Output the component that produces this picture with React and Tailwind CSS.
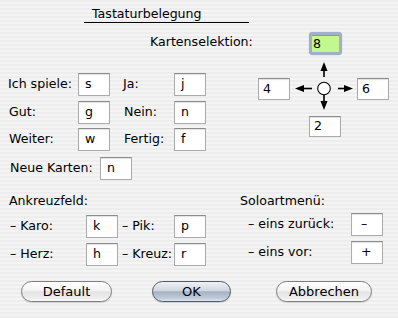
import React from "react";

const field =
  "w-[32px] h-[23px] bg-white border border-[#ababab] border-t-[#8c8c8c] shadow-[inset_0_1px_1px_rgba(0,0,0,0.12)] flex items-center pl-[6px] leading-none";

function Field({ v, cls = "" }) {
  return <div className={field + " " + cls}>{v}</div>;
}

function Btn({ children, w, primary }) {
  return (
    <div
      className={
        "h-[21px] rounded-full border flex items-center justify-center leading-none text-[13px] shadow-[0_1px_1px_rgba(0,0,0,0.15)] " +
        w +
        (primary
          ? " border-[#4f5967] bg-[linear-gradient(to_bottom,#eef1f5_0%,#d0d7e1_45%,#a6b2c3_52%,#c0cad7_85%,#dfe5ec_100%)]"
          : " border-[#7e7e7e] bg-[linear-gradient(to_bottom,#ffffff_0%,#f3f3f3_45%,#e3e3e3_52%,#ededed_85%,#fbfbfb_100%)]")
      }
    >
      {children}
    </div>
  );
}

function ArrowV({ up, h, y1, y2 }) {
  const tip = up ? y1 : y2;
  const base = up ? y1 + 9 : y2 - 9;
  return (
    <svg width="67" height={h} className="overflow-visible block">
      <line x1="34" y1={up ? base : y1} x2="34" y2={up ? y2 : base} stroke="#000" strokeWidth="1.6" />
      <polygon points={`34,${tip} 30.5,${base} 37.5,${base}`} fill="#000" />
    </svg>
  );
}

export default function App() {
  return (
    <div
      className="w-[398px] h-[318px] overflow-hidden text-black text-[12.6px] bg-[repeating-linear-gradient(to_bottom,#ededed_0px,#ededed_2px,#f4f4f4_2px,#f4f4f4_4px)]"
      style={{ fontFamily: '"Lucida Grande","DejaVu Sans",sans-serif' }}
    >
      {/* top section */}
      <div className="flex">
        <div className="w-[256px] flex flex-col">
          <div className="mt-[6px] ml-[84px] w-[165px] h-[17px] border-b border-black pl-[8px] leading-[16px]">
            Tastaturbelegung
          </div>
          <div className="mt-[11px] ml-[150px] leading-[16px] whitespace-nowrap">Kartenselektion:</div>

          <div className="mt-[23px] flex items-center h-[23px]">
            <span className="pl-[8px] w-[78px]">Ich spiele:</span>
            <Field v="s" />
            <span className="pl-[13px] w-[64px]">Ja:</span>
            <Field v="j" />
          </div>
          <div className="mt-[5px] flex items-center h-[23px]">
            <span className="pl-[9px] w-[78px]">Gut:</span>
            <Field v="g" />
            <span className="pl-[14px] w-[64px]">Nein:</span>
            <Field v="n" />
          </div>
          <div className="mt-[4px] flex items-center h-[23px]">
            <span className="pl-[9px] w-[78px]">Weiter:</span>
            <Field v="w" />
            <span className="pl-[14px] w-[64px]">Fertig:</span>
            <Field v="f" />
          </div>
          <div className="mt-[6px] flex items-center h-[23px]">
            <span className="pl-[10px] w-[100px] whitespace-nowrap">Neue Karten:</span>
            <Field v="n" />
          </div>
        </div>

        {/* arrow cross */}
        <div className="pt-[32px] ml-[2px] grid grid-cols-[32px_67px_32px] grid-rows-[23px_23px_22px_16px_21px]">
          <div />
          <div className="flex">
            <div className="ml-[19px] w-[33px] h-[23px] rounded-[4px] bg-[#9fb0c8] p-[3px] shadow-[0_0_1px_#7d8fa9]">
              <div className="w-full h-full bg-[#c4f78f] border-t border-[#8aa070] flex items-center pl-[1px] leading-none">
                8
              </div>
            </div>
          </div>
          <div />

          <div />
          <ArrowV up h={23} y1={7} y2={22} />
          <div />

          <Field v="4" cls="!h-[22px] !pl-[4px]" />
          <svg width="67" height="22" className="block">
            <line x1="14" y1="10.5" x2="22" y2="10.5" stroke="#000" strokeWidth="1.6" />
            <polygon points="5,10.5 14,7 14,14" fill="#000" />
            <circle cx="34" cy="10.5" r="6.3" fill="#fff" stroke="#000" strokeWidth="1.1" />
            <line x1="48" y1="10.5" x2="54" y2="10.5" stroke="#000" strokeWidth="1.6" />
            <polygon points="63,10.5 54,7 54,14" fill="#000" />
          </svg>
          <Field v="6" cls="!h-[22px] !pl-[4px]" />

          <div />
          <ArrowV h={16} y1={-5} y2={10} />
          <div />

          <div />
          <div className="flex">
            <Field v="2" cls="ml-[19px] !h-[21px] !pl-[4px]" />
          </div>
          <div />
        </div>
      </div>

      {/* lower section */}
      <div className="flex mt-[13px]">
        <div className="w-[240px] flex flex-col">
          <div className="pl-[9px] leading-[16px]">Ankreuzfeld:</div>
          <div className="mt-[6px] flex items-center h-[23px]">
            <span className="pl-[10px] w-[86px]">– Karo:</span>
            <Field v="k" />
            <span className="pl-[4px] w-[56px]">– Pik:</span>
            <Field v="p" />
          </div>
          <div className="mt-[5px] flex items-center h-[23px]">
            <span className="pl-[10px] w-[86px]">– Herz:</span>
            <Field v="h" />
            <span className="pl-[4px] w-[56px]">– Kreuz:</span>
            <Field v="r" />
          </div>
        </div>
        <div className="flex flex-col">
          <div className="leading-[16px]">Soloartmenü:</div>
          <div className="mt-[4px] flex items-center h-[23px]">
            <span className="pl-[8px] w-[111px] whitespace-nowrap">– eins zurück:</span>
            <Field v="–" cls="!pl-[9px]" />
          </div>
          <div className="mt-[5px] flex items-center h-[23px]">
            <span className="pl-[8px] w-[111px] whitespace-nowrap">– eins vor:</span>
            <Field v="+" cls="!pl-[9px]" />
          </div>
        </div>
      </div>

      {/* buttons */}
      <div className="flex mt-[15px]">
        <Btn w="ml-[21px] w-[91px]">Default</Btn>
        <Btn w="ml-[40px] w-[79px]" primary>
          OK
        </Btn>
        <Btn w="ml-[45px] w-[96px]">Abbrechen</Btn>
      </div>
    </div>
  );
}
